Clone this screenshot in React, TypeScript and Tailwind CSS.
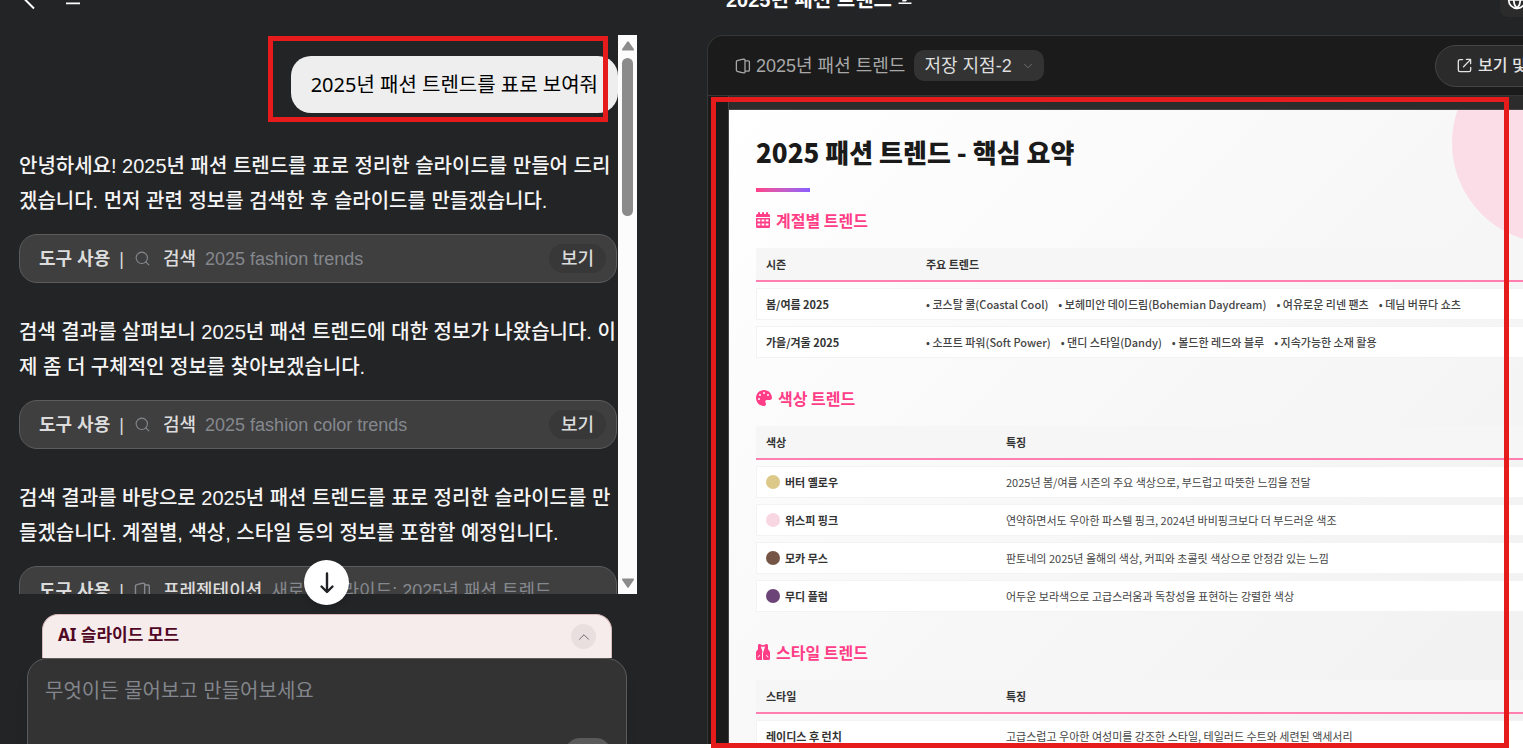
import { useState } from "react";
import { ChevronDown, ChevronUp, Globe, Search } from "lucide-react";
import { FaPalette, FaVest } from "react-icons/fa6";

function SlidesIcon({ className }: { className?: string }) {
  return (
    <svg viewBox="0 0 16 16" fill="none" stroke="currentColor" strokeWidth="1.3" strokeLinejoin="round" className={className} aria-hidden="true">
      <path d="M5.500 1.600 9 1.100a1 1 0 0 1 1 1v11.800a1 1 0 0 1-1 1l-3.500-.5" />
      <path d="M6 14.400 2.200 13.300a1 1 0 0 1-.8-1V3.700a1 1 0 0 1 .8-1L6 1.600" />
      <path d="M10 2.800h3.400a1 1 0 0 1 1 1v8.400a1 1 0 0 1-1 1H10" />
    </svg>
  );
}

function OpenIcon({ className }: { className?: string }) {
  return (
    <svg viewBox="0 0 16 16" fill="none" stroke="currentColor" strokeWidth="1.4" strokeLinecap="round" strokeLinejoin="round" className={className} aria-hidden="true">
      <path d="M6 1.700H3.200a1.800 1.800 0 0 0-1.800 1.800v9.300a1.800 1.800 0 0 0 1.800 1.800h9.600a1.800 1.800 0 0 0 1.800-1.800V10" />
      <path d="M10 1.500h4.500V6M14.300 1.700 7 9.300" />
    </svg>
  );
}

function CalendarIcon({ className }: { className?: string }) {
  return (
    <svg viewBox="0 0 448 512" fill="currentColor" fillRule="evenodd" className={className} aria-hidden="true">
      <path d="M96 0a32 32 0 0 1 32 32v32h64V32a32 32 0 0 1 64 0v32h64V32a32 32 0 0 1 64 0v32h16a48 48 0 0 1 48 48v48H0v-48a48 48 0 0 1 48-48h16V32A32 32 0 0 1 96 0z" />
      <path d="M0 192h448v272a48 48 0 0 1-48 48H48a48 48 0 0 1-48-48zM48 240v64h88v-64zM180 240v64h88v-64zM312 240v64h88v-64zM48 368v64h88v-64zM180 368v64h88v-64zM312 368v64h88v-64z" />
    </svg>
  );
}

type Step = { text: string; tool: string; detail: string; icon: "search" | "slides" };

const steps: Step[] = [
  {
    text: "안녕하세요! 2025년 패션 트렌드를 표로 정리한 슬라이드를 만들어 드리겠습니다. 먼저 관련 정보를 검색한 후 슬라이드를 만들겠습니다.",
    tool: "검색",
    detail: "2025 fashion trends",
    icon: "search",
  },
  {
    text: "검색 결과를 살펴보니 2025년 패션 트렌드에 대한 정보가 나왔습니다. 이제 좀 더 구체적인 정보를 찾아보겠습니다.",
    tool: "검색",
    detail: "2025 fashion color trends",
    icon: "search",
  },
  {
    text: "검색 결과를 바탕으로 2025년 패션 트렌드를 표로 정리한 슬라이드를 만들겠습니다. 계절별, 색상, 스타일 등의 정보를 포함할 예정입니다.",
    tool: "프레젠테이션",
    detail: "새로운 슬라이드: 2025년 패션 트렌드",
    icon: "slides",
  },
];

function StepBlock({ step }: { step: Step }) {
  return (
    <section className="mb-8">
      <p className="text-[20px] leading-[35px] font-medium break-all text-[#f5f5f5]">{step.text}</p>
      <div className="mt-[15px] mr-px flex h-[49px] items-center rounded-[18px] border border-[#5c5c5c] bg-[#3f3f3f] pr-[10px] pl-[19px] text-[18px] leading-6 whitespace-nowrap">
        <span className="font-bold text-[#dcdcdc]">도구 사용</span>
        <span className="ml-[9px] text-[#dcdcdc]">|</span>
        {step.icon === "search" ? (
          <Search className="mr-3 ml-[10px] size-[17px] shrink-0 text-[#85888e]" strokeWidth={1.5} />
        ) : (
          <SlidesIcon className="mr-3 ml-[10px] size-[17px] shrink-0 text-[#85888e]" />
        )}
        <span className="font-medium text-[#dcdcdc]">{step.tool}</span>
        <span className="ml-[9px] text-[#85888e]">{step.detail}</span>
        {step.icon === "search" && (
          <button className="ml-auto h-[29px] rounded-full bg-[#383838] px-3 font-medium text-[#dcdcdc]">보기</button>
        )}
      </div>
    </section>
  );
}

function ScrollTrack() {
  return (
    <div className="flex w-[19px] shrink-0 flex-col items-center bg-[#fcfcfc] py-[6px]" aria-hidden="true">
      <svg viewBox="0 0 12 10" className="h-[10px] w-3 fill-[#8b8b8b]">
        <path d="M5.200.8a1 1 0 0 1 1.600 0l5 7.200c.5.800.2 1.600-.800 1.600H1c-1 0-1.300-.8-.800-1.600z" />
      </svg>
      <div className="mt-[7px] h-[158px] w-[11px] rounded-full bg-[#8b8b8b]" />
      <svg viewBox="0 0 12 10" className="mt-auto h-[10px] w-3 fill-[#8b8b8b]">
        <path d="M5.200 9.200a1 1 0 0 0 1.600 0l5-7.200c.5-.8.200-1.600-.8-1.600H1C0 .4-.3 1.200.2 2z" />
      </svg>
    </div>
  );
}

function ChatColumn() {
  const [draft, setDraft] = useState("");
  return (
    <div className="flex min-h-0 min-w-0 flex-col">
      <header className="-mt-8 mb-[3px] flex h-16 shrink-0 items-center pl-[10px] text-white">
        <button aria-label="뒤로">
          <svg viewBox="0 0 38 38" className="size-[38px]" fill="none" stroke="currentColor" strokeWidth="2">
            <path d="M24 27.500 14 17.500l10-10" />
          </svg>
        </button>
        <button aria-label="메뉴" className="ml-[15px]">
          <svg viewBox="0 0 20 20" className="size-5" fill="none" stroke="currentColor" strokeWidth="1.700">
            <path d="M3 7h14M3 13.300h14" />
          </svg>
        </button>
      </header>

      <div className="relative mr-[70px] flex min-h-0 flex-1">
        <div className="min-w-0 flex-1 overflow-hidden pl-[19px]">
          <div className="flex justify-end pt-[21px]">
            <div className="relative">
              <p className="rounded-[20px] bg-[#eeeeee] px-5 py-[11px] font-[Noto_Sans,Noto_Sans_CJK_KR,sans-serif] text-[20px] leading-[35px] text-black">
                2025년 패션 트렌드를 표로 보여줘
              </p>
              <div className="absolute -top-5 right-[10px] h-[86px] w-[340px] border-[5px] border-[#e61b1b]" />
            </div>
          </div>
          <div className="mt-[36px]">
            {steps.map((step) => (
              <StepBlock key={step.detail} step={step} />
            ))}
          </div>
        </div>
        <ScrollTrack />
        <button
          aria-label="맨 아래로"
          className="absolute -bottom-[11px] left-[304px] z-10 flex size-[45px] items-center justify-center rounded-full bg-white shadow-md"
        >
          <svg viewBox="0 0 24 24" className="size-6" fill="none" stroke="#202124" strokeWidth="2.400" strokeLinecap="round" strokeLinejoin="round">
            <path d="M12 2.500v18M6.500 15.500l5.500 5.500 5.500-5.500" />
          </svg>
        </button>
      </div>

      <div className="flex h-[150px] shrink-0 flex-col overflow-hidden pt-5 pr-[80px] pl-[27px]">
        <div className="mx-[15px] flex h-11 shrink-0 items-center justify-between rounded-t-[16px] border border-b-0 border-[#d8b9ba] bg-[#f6ecec] px-[15px]">
          <span className="pb-[3px] font-[Noto_Sans,Noto_Sans_CJK_KR,sans-serif] text-[17px] leading-6 font-bold text-[#500724]">AI 슬라이드 모드</span>
          <button aria-label="접기" className="flex size-[25px] items-center justify-center rounded-full bg-[#e9dfdf]">
            <ChevronUp className="size-[18px] text-[#6f6669]" strokeWidth={1.3} />
          </button>
        </div>
        <div className="flex flex-1 flex-col rounded-t-[20px] border border-[#5c5c5c] bg-[#333333] shadow-lg">
          <textarea
            aria-label="메시지"
            value={draft}
            onChange={(event) => setDraft(event.target.value)}
            placeholder="무엇이든 물어보고 만들어보세요"
            className="h-[79px] shrink-0 resize-none bg-transparent px-[17px] pt-4 text-[20px] leading-8 text-white outline-none placeholder:text-[#83868c]"
          />
          <div className="h-[6px] overflow-hidden pr-[15px]">
            <button aria-label="보내기" className="ml-auto block h-[30px] w-[46px] rounded-full bg-[#5a5a5a]" />
          </div>
        </div>
      </div>
    </div>
  );
}

function SectionTitle({ icon, children }: { icon: React.ReactNode; children: React.ReactNode }) {
  return (
    <h2 className="flex h-6 items-center gap-[6px] text-[16px] leading-6 font-bold text-[#ff3e87]">
      {icon}
      {children}
    </h2>
  );
}

const headCell = "h-[34px] border-b-2 border-[#ff7fb0] bg-[#f6f6f6] px-[10px] py-0 text-left font-bold text-[#333333]";
const firstCell = "h-8 border border-r-0 border-[#f3f3f3] bg-white py-0 pr-0 pl-[9px] text-left font-bold text-[#333333]";
const lastCell = "h-8 border border-l-0 border-[#f3f3f3] bg-white px-[10px] py-0 text-[#444444]";
const tableStyle = "mt-[10px] w-full table-fixed border-separate border-spacing-x-0 border-spacing-y-[6px] text-[11px] leading-4 whitespace-nowrap";

const seasons = [
  { name: "봄/여름 2025", items: ["코스탈 쿨(Coastal Cool)", "보헤미안 데이드림(Bohemian Daydream)", "여유로운 리넨 팬츠", "데님 버뮤다 쇼츠"] },
  { name: "가을/겨울 2025", items: ["소프트 파워(Soft Power)", "댄디 스타일(Dandy)", "볼드한 레드와 블루", "지속가능한 소재 활용"] },
];

const colors = [
  { name: "버터 옐로우", dot: "bg-[#dcc98a]", note: "2025년 봄/여름 시즌의 주요 색상으로, 부드럽고 따뜻한 느낌을 전달" },
  { name: "위스피 핑크", dot: "bg-[#f9d7e2]", note: "연약하면서도 우아한 파스텔 핑크, 2024년 바비핑크보다 더 부드러운 색조" },
  { name: "모카 무스", dot: "bg-[#755646]", note: "판토네의 2025년 올해의 색상, 커피와 초콜릿 색상으로 안정감 있는 느낌" },
  { name: "무디 플럼", dot: "bg-[#6c4477]", note: "어두운 보라색으로 고급스러움과 독창성을 표현하는 강렬한 색상" },
];

function Slide() {
  return (
    <article className="relative min-h-[640px] w-[854px] shrink-0 overflow-hidden bg-linear-135 from-white to-[#f0f0f0] px-[27px] pt-[22px] font-[Noto_Sans_CJK_KR,sans-serif]">
      <div className="absolute -top-[67px] -right-[69px] size-[200px] rounded-full bg-[#fadde7]" />
      <div className="relative">
        <h1 className="text-[26px] leading-10 font-black text-[#1a1a1a]">2025 패션 트렌드 - 핵심 요약</h1>
        <div className="mt-4 mb-[16px] h-1 w-[54px] bg-linear-to-r from-[#ff3e87] to-[#8b5cff]" />

        <SectionTitle icon={<CalendarIcon className="h-4 w-[14px]" />}>계절별 트렌드</SectionTitle>
        <table className={tableStyle}>
          <thead>
            <tr>
              <th className={`${headCell} w-1/5`}>시즌</th>
              <th className={headCell}>주요 트렌드</th>
            </tr>
          </thead>
          <tbody>
            {seasons.map((season) => (
              <tr key={season.name}>
                <th className={firstCell}>{season.name}</th>
                <td className={lastCell}>
                  <ul className="flex gap-[10px] font-medium">
                    {season.items.map((item) => (
                      <li key={item}>• {item}</li>
                    ))}
                  </ul>
                </td>
              </tr>
            ))}
          </tbody>
        </table>

        <div className="h-[22px]" />
        <SectionTitle icon={<FaPalette className="size-4" />}>색상 트렌드</SectionTitle>
        <table className={tableStyle}>
          <thead>
            <tr>
              <th className={`${headCell} w-[30%]`}>색상</th>
              <th className={headCell}>특징</th>
            </tr>
          </thead>
          <tbody>
            {colors.map((color) => (
              <tr key={color.name}>
                <th className={firstCell}>
                  <span className="flex items-center gap-[5px]">
                    <span className={`size-[14px] rounded-full ${color.dot}`} />
                    {color.name}
                  </span>
                </th>
                <td className={lastCell}>{color.note}</td>
              </tr>
            ))}
          </tbody>
        </table>

        <div className="h-[22px]" />
        <SectionTitle icon={<FaVest className="h-4 w-[14px]" />}>스타일 트렌드</SectionTitle>
        <table className={tableStyle}>
          <thead>
            <tr>
              <th className={`${headCell} w-[30%]`}>스타일</th>
              <th className={headCell}>특징</th>
            </tr>
          </thead>
          <tbody>
            <tr>
              <th className={firstCell}>레이디스 후 런치</th>
              <td className={lastCell}>고급스럽고 우아한 여성미를 강조한 스타일, 테일러드 수트와 세련된 액세서리</td>
            </tr>
          </tbody>
        </table>
      </div>
    </article>
  );
}

function PreviewColumn() {
  return (
    <div className="relative min-h-0 min-w-0">
      <div className="flex h-full flex-col overflow-hidden">
        <header className="-mt-8 mb-[3px] flex h-16 shrink-0 items-center pl-[19px] text-white">
          <span className="text-[20px] leading-7 font-bold whitespace-nowrap">2025년 패션 트렌드</span>
          <svg viewBox="0 0 16 16" className="ml-[5px] size-4 shrink-0" fill="none" stroke="currentColor" strokeWidth="1.400">
            <path d="M1.500 11.300h13M6 8.700V6.200l5-5 2.500 2.500-5 5z" />
          </svg>
          <button aria-label="언어" className="-mr-[11px] ml-auto flex size-[34px] shrink-0 items-center justify-center rounded-[8px] bg-[#2b2b2b]">
            <Globe className="size-[20px]" strokeWidth={2} />
          </button>
        </header>

        <div className="flex min-h-0 w-[904px] flex-1 flex-col overflow-hidden rounded-tl-[16px] border border-b-0 border-[#363636] bg-[#1b1b1b]">
          <div className="flex h-[60px] shrink-0 items-center border-b border-[#363636] pl-[27px]">
            <SlidesIcon className="size-4 shrink-0 text-[#a8a8a8]" />
            <span className="ml-[5px] text-[18px] leading-6 whitespace-nowrap text-[#a8a8a8]">2025년 패션 트렌드</span>
            <span className="relative ml-[9px] flex h-[31px] w-[130px] items-center rounded-[10px] bg-[#333333] text-[#dedede]">
              <select aria-label="저장 지점" className="h-full w-full appearance-none bg-transparent pl-[10px] text-[18px] leading-6 outline-none">
                <option>저장 지점-2</option>
              </select>
              <ChevronDown className="pointer-events-none absolute right-[9px] size-[14px] text-[#777777]" strokeWidth={1.500} />
            </span>
            <button className="ml-auto flex h-[42px] w-[175px] items-center rounded-full border border-[#454545] bg-[#2b2b2b] pl-[21px] text-[16px] leading-6 font-medium whitespace-nowrap text-[#e4e4e4]">
              <OpenIcon className="mr-[6px] size-[15px] shrink-0" />
              보기 및
            </button>
          </div>
          <div className="ml-5 min-h-0 flex-1 overflow-hidden border-l border-[#444444]">
            <div className="h-[14px] border-b border-[#444444] bg-[#2c2c2c]" />
            <Slide />
          </div>
        </div>
      </div>
      <div className="pointer-events-none absolute top-[97px] right-[14px] -bottom-1 left-[4px] border-[5px] border-[#e61b1b]" />
    </div>
  );
}

export default function App() {
  return (
    <div className="flex h-screen flex-col overflow-hidden bg-white font-[Liberation_Sans,Noto_Sans_CJK_KR,sans-serif]">
      <main className="grid min-h-0 flex-1 grid-cols-[minmax(0,707fr)_minmax(0,816fr)] grid-rows-[minmax(0,1fr)] bg-[#232426]">
        <ChatColumn />
        <PreviewColumn />
      </main>
      <div className="h-1 shrink-0" />
    </div>
  );
}
